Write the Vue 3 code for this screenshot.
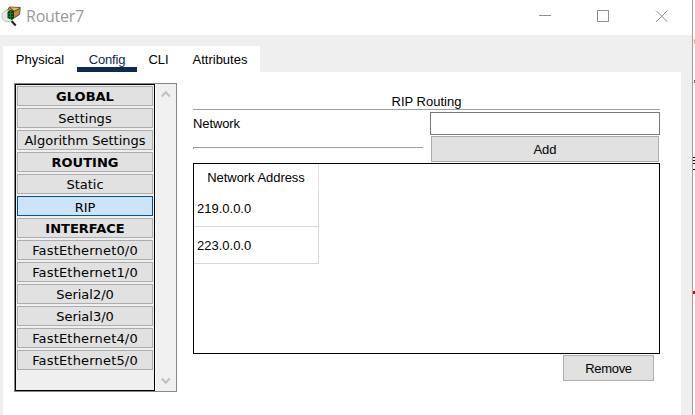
<script setup>
const tabs = ['Physical', 'Config', 'CLI', 'Attributes']
const menu = [
  { label: 'GLOBAL', heading: true },
  { label: 'Settings' },
  { label: 'Algorithm Settings' },
  { label: 'ROUTING', heading: true },
  { label: 'Static' },
  { label: 'RIP', active: true },
  { label: 'INTERFACE', heading: true },
  { label: 'FastEthernet0/0' },
  { label: 'FastEthernet1/0' },
  { label: 'Serial2/0' },
  { label: 'Serial3/0' },
  { label: 'FastEthernet4/0' },
  { label: 'FastEthernet5/0' },
]
const networks = ['219.0.0.0', '223.0.0.0']
</script>

<template>
  <div class="desktop">
    <div class="window">
      <header class="titlebar">
        <svg class="logo" width="20" height="22" viewBox="0 0 20 22">
          <path d="M6.500 5L8.500 2L19.300 2.500L18.500 9.500L13 13H7Z" fill="#c08c35" stroke="#4a3818" stroke-width="0.8" />
          <path d="M9 2.5L13 6.500L19 3" fill="none" stroke="#51401d" />
          <path d="M9.500 2.500L18.500 3L13.500 5.500Z" fill="#e7b75a" />
          <circle cx="6.500" cy="11" r="5.700" fill="#e2e9e5" stroke="#bcc4c0" />
          <path d="M6.500 7L9 5L13 6V13L11 15L6.500 13Z" fill="#063d12" />
          <path d="M7.500 8.500H12M7.500 11.500H12M9.500 6V14" stroke="#14812b" />
          <path d="M10.500 16L14.700 20.500" stroke="#222" stroke-width="2" />
        </svg>
        <span class="title">Router7</span>
        <svg class="controls" width="130" height="14" viewBox="0 0 130 14" fill="none" stroke="#8f8f8f">
          <path d="M0 6.5H12" />
          <rect x="58.5" y="1.5" width="11" height="11" />
          <path d="M117 1.5L128.500 13M128.500 1.500L117 13" />
        </svg>
      </header>

      <nav class="tabs">
        <div v-for="t in tabs" :key="t" class="tab" :class="[t.toLowerCase(), { current: t === 'Config' }]">{{ t }}</div>
      </nav>

      <main class="panel">
        <aside class="sidebar">
          <div class="list">
            <div v-for="m in menu" :key="m.label" class="item" :class="{ heading: m.heading, active: m.active, port: m.label.startsWith('Fast') }">{{ m.label }}</div>
          </div>
          <div class="scroll">
            <svg width="10" height="8" viewBox="0 0 10 8"><path d="M0.7 6.500L4.750 2.300L8.800 6.500" fill="none" stroke="#bfbfbf" stroke-width="2" /></svg>
            <svg width="10" height="8" viewBox="0 0 10 8"><path d="M0.7 1.500L4.750 5.700L8.800 1.500" fill="none" stroke="#bfbfbf" stroke-width="2" /></svg>
          </div>
        </aside>

        <section class="form">
          <h1>RIP Routing</h1>
          <div class="fields">
            <div class="left">
              <label for="network">Network</label>
              <div class="rule"></div>
            </div>
            <div class="right">
              <input id="network" type="text" />
              <button class="add">Add</button>
            </div>
          </div>
          <div class="grid">
            <div class="head">Network Address</div>
            <div v-for="n in networks" :key="n" class="cell">{{ n }}</div>
          </div>
          <button class="remove">Remove</button>
        </section>
      </main>
    </div>
    <div class="behind">
      <i class="orange"></i>
      <i class="dot"></i>
      <i class="glyph"></i>
      <i class="red"></i>
    </div>
  </div>
</template>

<style>
body {
  overflow: hidden;
}
</style>

<style scoped>
* {
  box-sizing: border-box;
}
.desktop {
  display: flex;
  width: 695px;
  height: 415px;
  overflow: hidden;
  background: #fff;
  color: #000;
  font: 13px/16px "Liberation Sans", Arial, sans-serif;
}
.window {
  width: 693px;
  height: 415px;
  border-right: 1px solid #a0a0a3;
  background: #efefef;
}
.titlebar {
  display: flex;
  height: 35px;
  background: #fff;
}
.logo {
  margin: 5px 0 0 1px;
}
.title {
  width: 80px;
  margin: 5px 0 0 5px;
  color: #999;
  font: 16px/22px "Open Sans", "Noto Sans", sans-serif;
  letter-spacing: -0.25px;
}
.controls {
  margin: 9px 0 0 433px;
}
.tabs {
  display: flex;
  width: 257px;
  height: 26px;
  margin: 11px 0 0 3px;
  background: #fff;
}
.tab {
  height: 26px;
  padding-top: 6px;
  text-align: center;
  white-space: nowrap;
}
.physical { width: 74px; }
.config { width: 60px; }
.cli { width: 43px; }
.attributes { width: 80px; }
.current {
  border-bottom: 5px solid #10294e;
  color: #10294e;
  letter-spacing: -0.2px;
}
.panel {
  display: flex;
  width: 678px;
  height: 343px;
  margin-left: 3px;
  padding: 11px 0 0 11px;
  background: #fff;
}
.sidebar {
  display: flex;
  width: 163px;
  height: 309px;
  border: 1px solid #828790;
}
.list {
  display: flex;
  flex-direction: column;
  gap: 2px;
  width: 140px;
  padding: 1px;
  border: 1px solid #000;
  background: #efefef;
}
.item {
  height: 20px;
  border: 1px solid #adadad;
  background: #e1e1e1;
  font: 13px/20px "DejaVu Sans", Verdana, sans-serif;
  text-align: center;
  white-space: nowrap;
}
.heading {
  font-weight: bold;
}
.port {
  letter-spacing: 0.18px;
}
.active {
  padding-top: 1px;
  border-color: #005499;
  background: #cce4f7;
}
.scroll {
  display: flex;
  flex: 1;
  flex-direction: column;
  justify-content: space-between;
  padding: 6px 0 6px 5px;
  border-left: 1px solid #fff;
  background: #f0f0f0;
}
.form {
  display: flex;
  flex-direction: column;
  width: 467px;
  margin-left: 16px;
  padding-top: 10px;
}
h1 {
  height: 17px;
  margin: 0;
  padding-top: 1px;
  border-bottom: 1px solid #a0a0a0;
  font-size: 13px;
  font-weight: normal;
  text-align: center;
}
.fields {
  display: flex;
  justify-content: space-between;
  height: 53px;
}
.left {
  width: 230px;
  padding-top: 6px;
}
label {
  display: block;
  height: 31px;
  letter-spacing: -0.1px;
}
.rule {
  border-top: 1px solid #a0a0a0;
}
.rule::after {
  display: block;
  width: 1px;
  height: 1px;
  background: #a0a0a0;
  content: "";
}
.right {
  display: flex;
  flex-direction: column;
  align-items: center;
  gap: 1px;
  width: 230px;
  padding-top: 2px;
}
input {
  width: 230px;
  height: 23px;
  padding: 0 4px;
  border: 1px solid #7a7a7a;
  background: #fff;
  font: inherit;
}
button {
  height: 26px;
  padding: 2px 0 0;
  border: 1px solid #adadad;
  background: #e1e1e1;
  color: #000;
  font: inherit;
}
.add {
  width: 228px;
}
.grid {
  height: 191px;
  border: 1px solid #000;
}
.head {
  width: 125px;
  height: 26px;
  padding-top: 6px;
  border-right: 1px solid #e5e5e5;
  letter-spacing: -0.05px;
  text-align: center;
}
.cell {
  width: 125px;
  height: 37px;
  padding: 11px 0 0 3px;
  border: solid #d8d8d8;
  border-width: 0 1px 1px 0;
}
.remove {
  align-self: flex-end;
  width: 91px;
  margin: 1px 6px 0 0;
  letter-spacing: -0.3px;
}
.behind {
  display: flex;
  flex-direction: column;
  width: 2px;
}
.behind i {
  flex: none;
}
.orange {
  height: 5px;
  margin: 39px 0 0 1px;
  background: #f5b45a;
}
.dot {
  height: 3px;
  margin: 36px 0 0 1px;
  background: #666;
}
.glyph {
  height: 13px;
  margin-top: 74px;
  border: solid #000;
  border-width: 1px 0;
  background: linear-gradient(#fff 2px, #000 2px 3px, #fff 3px 5px, #000 5px 6px, #fff 6px);
}
.red {
  height: 3px;
  margin-top: 121px;
  background: #f00000;
}
</style>
